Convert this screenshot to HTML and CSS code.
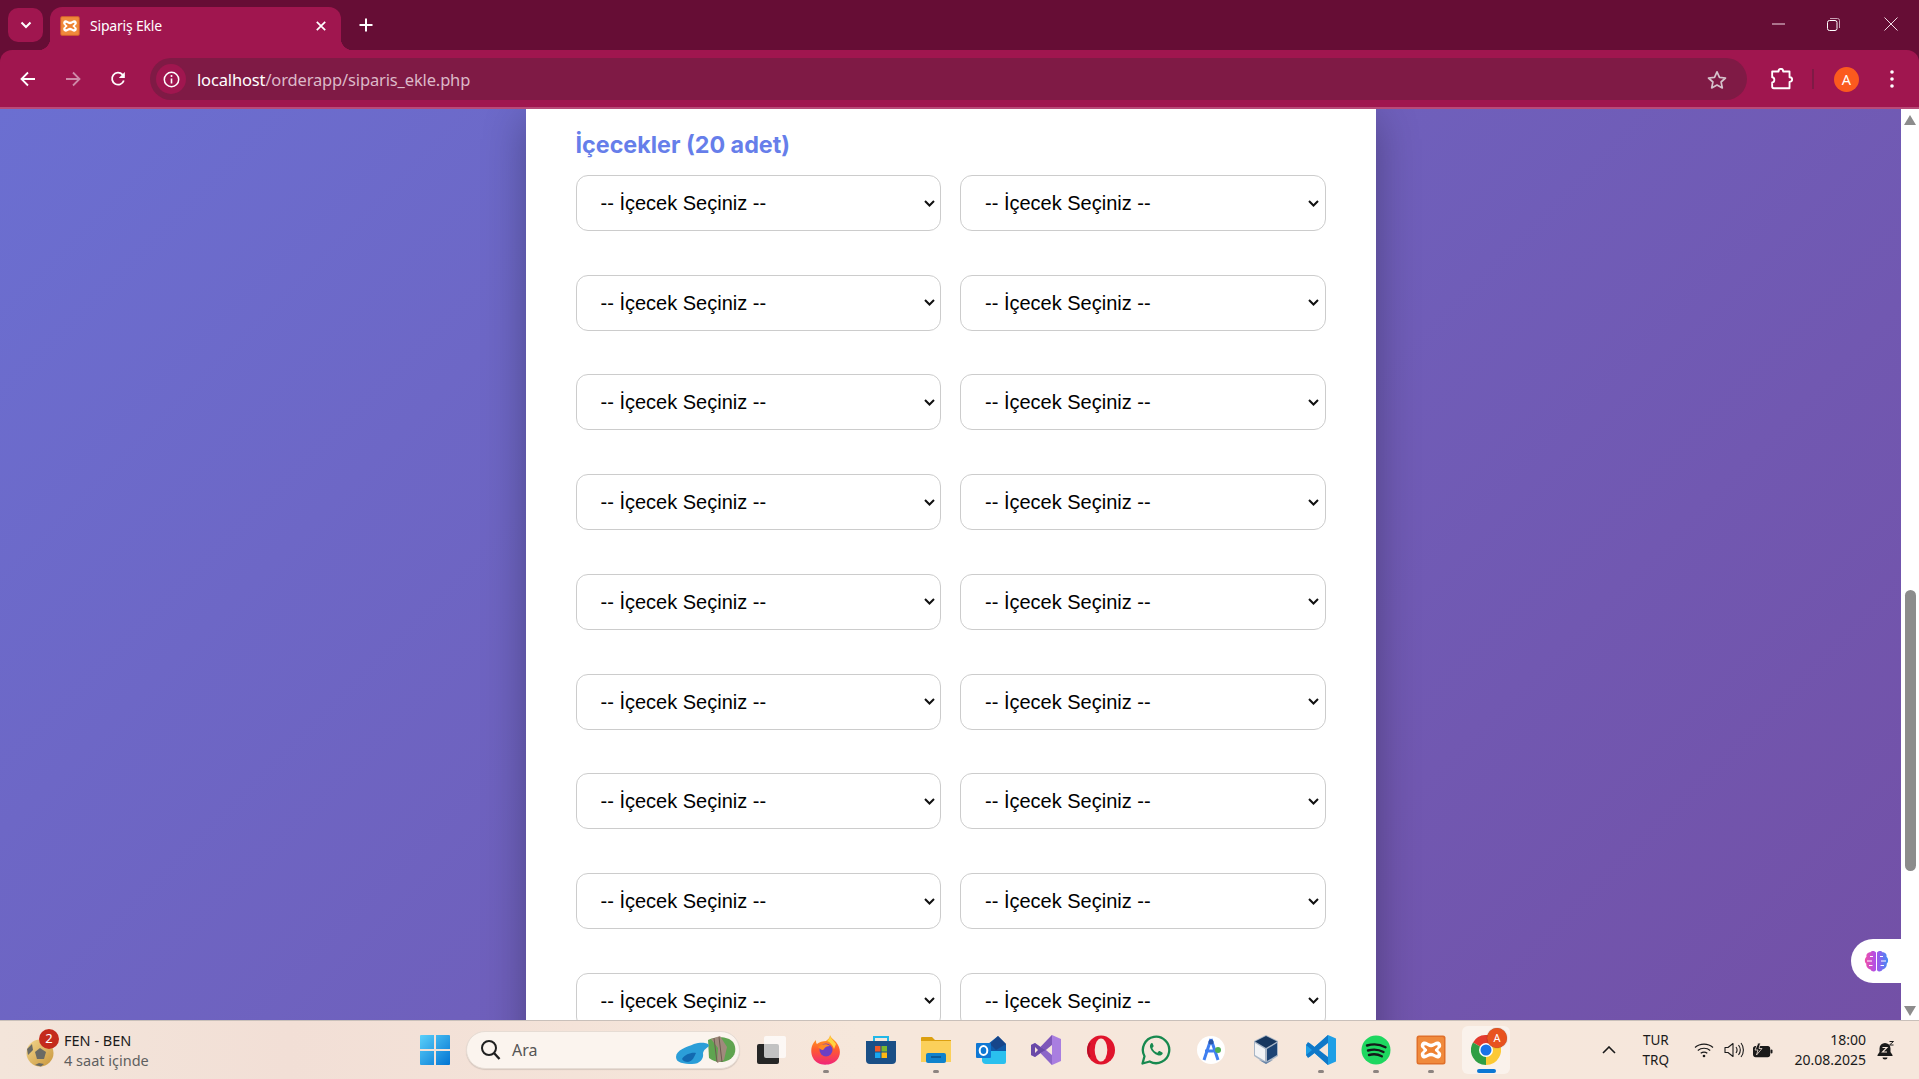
FILE: index.html
```html
<!doctype html>
<html lang="tr">
  <head>
    <meta charset="utf-8">
    <title>Sipariş Ekle</title>
    <link rel="stylesheet" href="styles.css">
  </head>
  <body>
    <svg class="defs" width="0" height="0">
      <symbol id="xampp" viewBox="0 0 30 30">
        <rect x="0.5" y="0.5" width="29" height="29" rx="2.5" fill="#e0702a"/>
        <rect x="2" y="2" width="26" height="26" rx="1.5" fill="#f08a3c"/>
        <path d="M8.5 6.5c2.6 0 3.4 2.2 6.500 2.200s3.900-2.200 6.500-2.200c2.700 0 3.700 2.300 3.700 4.300 0 2.400-2.700 2.700-2.700 4.200s2.700 1.800 2.700 4.200c0 2-1 4.300-3.700 4.300-2.600 0-3.400-2.200-6.500-2.200s-3.900 2.200-6.500 2.200c-2.700 0-3.700-2.300-3.700-4.300 0-2.400 2.700-2.700 2.700-4.200s-2.700-1.800-2.700-4.200c0-2 1-4.300 3.700-4.300z" fill="#fff"/>
        <path d="M9 10.200c2 0 3.500 2 6 2s4-2 6-2c1 0 .9 1.200.2 2-1 1.200-2.400 1.600-2.400 2.800s1.400 1.600 2.400 2.800c.7.800.8 2-.2 2-2 0-3.500-2-6-2s-4 2-6 2c-1 0-.9-1.200-.2-2 1-1.200 2.400-1.600 2.400-2.800s-1.400-1.600-2.400-2.800c-.7-.8-.8-2 .2-2z" fill="#ee8232"/>
      </symbol>
    </svg>

    <header class="tabstrip">
      <button class="tab-search">
        <svg width="12" height="8" viewBox="0 0 12 8"><path d="M1.500 1.500 6 6l4.500-4.500" fill="none" stroke="#fff" stroke-width="2"/></svg>
      </button>
      <div class="tab">
        <svg class="favicon" width="20" height="20"><use href="#xampp"/></svg>
        <span class="tab-title">Sipariş Ekle</span>
        <svg class="tab-close" width="10" height="10" viewBox="0 0 10 10"><path d="M.8.800l8.400 8.400M9.200.800.8 9.200" stroke="#fff" stroke-width="1.700"/></svg>
      </div>
      <svg class="new-tab" width="14" height="14" viewBox="0 0 14 14"><path d="M7 .5v13M.5 7h13" stroke="#fff" stroke-width="2"/></svg>
      <div class="window-controls">
        <svg width="13" height="2" viewBox="0 0 13 2"><path d="M0 1h13" stroke="#f2dbe5" stroke-width="1"/></svg>
        <svg width="13" height="13" viewBox="0 0 13 13"><rect x=".5" y="2.500" width="9.500" height="10" rx="2" fill="none" stroke="#fff"/><path d="M3 .5h7.500a2 2 0 0 1 2 2V10" fill="none" stroke="#c9a0b4"/></svg>
        <svg width="14" height="14" viewBox="0 0 14 14"><path d="M.5.500l13 13M13.500.500l-13 13" stroke="#f2dbe5" stroke-width="1"/></svg>
      </div>
    </header>

    <nav class="toolbar">
      <svg class="nav-icon" width="16" height="16" viewBox="0 0 16 16"><path d="M15 8H2M8 1.500 1.500 8 8 14.500" fill="none" stroke="#fff" stroke-width="1.800"/></svg>
      <svg class="nav-icon" width="16" height="16" viewBox="0 0 16 16"><path d="M1 8h13M8 1.500 14.500 8 8 14.500" fill="none" stroke="#cf8aa8" stroke-width="1.800"/></svg>
      <svg class="nav-icon" width="16" height="16" viewBox="0 0 16 16"><path d="M13.800 9.500A6 6 0 1 1 12.500 3.600L14 5" fill="none" stroke="#fff" stroke-width="1.800"/><path d="M14.800 1v6h-6z" fill="#fff"/></svg>
      <div class="omnibox">
        <span class="site-info">
          <svg width="17" height="17" viewBox="0 0 17 17"><circle cx="8.500" cy="8.500" r="7.200" fill="none" stroke="#fff" stroke-width="1.500"/><path d="M8.500 7.500v5" stroke="#fff" stroke-width="1.600"/><circle cx="8.500" cy="5" r="1" fill="#fff"/></svg>
        </span>
        <span class="url"><span class="host">localhost</span>/orderapp/siparis_ekle.php</span>
        <svg class="star" width="20" height="19" viewBox="0 0 20 19"><path d="M10 1.800l2.500 5.500 6 .7-4.400 4 1.200 5.900L10 15l-5.300 2.900 1.200-5.900-4.400-4 6-.7z" fill="none" stroke="#d5c3cb" stroke-width="1.700" stroke-linejoin="round"/></svg>
      </div>
      <svg class="extensions" width="22" height="22" viewBox="1 2.500 19 19"><path d="M2 5.500h5.500c0-3 4-3 4 0H17v5c3 0 3 4 0 4v5.500H3.500a1.500 1.500 0 0 1-1.500-1.500v-3.500c2.500 0 2.500-4.500 0-4.500z" fill="none" stroke="#fff" stroke-width="1.600" stroke-linejoin="round"/></svg>
      <span class="toolbar-sep"></span>
      <span class="avatar">A</span>
      <svg class="menu-dots" width="4" height="18" viewBox="0 0 4 18"><circle cx="2" cy="2" r="1.800" fill="#fff"/><circle cx="2" cy="9" r="1.800" fill="#fff"/><circle cx="2" cy="16" r="1.800" fill="#fff"/></svg>
    </nav>

    <div class="viewport">
      <main class="page">
        <form class="card">
          <h3 class="section-title">İçecekler (20 adet)</h3>
          <div class="select-grid">
            <select class="drink"><option>-- İçecek Seçiniz --</option></select>
            <select class="drink"><option>-- İçecek Seçiniz --</option></select>
            <select class="drink"><option>-- İçecek Seçiniz --</option></select>
            <select class="drink"><option>-- İçecek Seçiniz --</option></select>
            <select class="drink"><option>-- İçecek Seçiniz --</option></select>
            <select class="drink"><option>-- İçecek Seçiniz --</option></select>
            <select class="drink"><option>-- İçecek Seçiniz --</option></select>
            <select class="drink"><option>-- İçecek Seçiniz --</option></select>
            <select class="drink"><option>-- İçecek Seçiniz --</option></select>
            <select class="drink"><option>-- İçecek Seçiniz --</option></select>
            <select class="drink"><option>-- İçecek Seçiniz --</option></select>
            <select class="drink"><option>-- İçecek Seçiniz --</option></select>
            <select class="drink"><option>-- İçecek Seçiniz --</option></select>
            <select class="drink"><option>-- İçecek Seçiniz --</option></select>
            <select class="drink"><option>-- İçecek Seçiniz --</option></select>
            <select class="drink"><option>-- İçecek Seçiniz --</option></select>
            <select class="drink"><option>-- İçecek Seçiniz --</option></select>
            <select class="drink"><option>-- İçecek Seçiniz --</option></select>
            <select class="drink"><option>-- İçecek Seçiniz --</option></select>
            <select class="drink"><option>-- İçecek Seçiniz --</option></select>
          </div>
        </form>
        <div class="brain-pill">
          <svg width="25" height="23" viewBox="0 0 25 23">
            <defs>
              <linearGradient id="brain" x1="0" y1="0" x2="1" y2="0">
                <stop offset="0" stop-color="#f04fa8"/>
                <stop offset=".45" stop-color="#b04fe8"/>
                <stop offset="1" stop-color="#3f8cf5"/>
              </linearGradient>
            </defs>
            <path d="M12 2.500C11 .5 7.500.3 6.500 2.300 3.500 2.300 2 4.500 2.500 6.800.5 8.500.3 12 2.300 13.800 2 17 4 19 6.500 19.500c1.300 2.600 4.500 2.500 5.500.5zM13 2.500c1-2 4.500-2.200 5.500-.2 3 0 4.500 2.200 4 4.500 2 1.700 2.200 5.200.2 7 .3 3.200-1.700 5.200-4.200 5.700-1.300 2.600-4.500 2.500-5.500.5z" fill="url(#brain)"/>
            <path d="M3 11h5M6 6.500h3M5 15.500h3.500M16 6.500h3M17 11h5M16.500 15.500H20" stroke="#fff" stroke-width="1"/>
          </svg>
        </div>
      </main>
      <div class="scrollbar">
        <span class="scroll-up"></span>
        <div class="scroll-track"><span class="scroll-thumb"></span></div>
        <span class="scroll-down"></span>
      </div>
    </div>

    <footer class="taskbar">
      <div class="tb-left">
        <div class="weather-icon">
          <svg width="28" height="28" viewBox="0 0 28 28">
            <defs>
              <linearGradient id="ball" x1="0" y1="0" x2="1" y2="1">
                <stop offset="0" stop-color="#f3d68c"/>
                <stop offset="1" stop-color="#c8963c"/>
              </linearGradient>
            </defs>
            <circle cx="14" cy="14" r="13.500" fill="url(#ball)"/>
            <path d="M14 9l6 4-2 7h-7l-2-7z" fill="#6a6a64"/>
            <path d="M1 10l5-5 1 6-5 5zM9 26l4-2 5 1-3 2.500z" fill="#6a6a64"/>
          </svg>
          <span class="weather-badge">2</span>
        </div>
        <div class="weather-text">
          <span class="weather-title">FEN - BEN</span>
          <span class="weather-sub">4 saat içinde</span>
        </div>
      </div>

      <div class="tb-center">
        <svg class="start" width="30" height="30" viewBox="0 0 30 30">
          <defs>
            <linearGradient id="win" x1="0" y1="0" x2="1" y2="1">
              <stop offset="0" stop-color="#5ad0fa"/>
              <stop offset="1" stop-color="#0274d2"/>
            </linearGradient>
          </defs>
          <path d="M1 0h13v14H0V1a1 1 0 0 1 1-1zM16 0h13a1 1 0 0 1 1 1v13H16zM0 16h14v14H1a1 1 0 0 1-1-1zM16 16h14v13a1 1 0 0 1-1 1H16z" fill="url(#win)"/>
        </svg>
        <div class="searchbox">
          <svg width="21" height="22" viewBox="0 0 21 22"><circle cx="9" cy="9" r="7" fill="none" stroke="#1f1f1f" stroke-width="2"/><path d="M14 14l5.500 6" stroke="#1f1f1f" stroke-width="2.400"/></svg>
          <span class="search-label">Ara</span>
          <svg class="search-art" width="63" height="30" viewBox="0 0 63 30">
            <path d="M34 5c8-4 20-4 25 2 4 6 3 14-4 18-6 3-14 3-20-2z" fill="#5fa450"/>
            <path d="M37 4l9-3 7 11-3 13-7 3 1-15z" fill="#a08a7c"/>
            <path d="M40 3l3 24M45 2l3 25" stroke="#6e5a50" stroke-width="1"/>
            <path d="M2 22C2 15 13 12 20 9c6-2 15-2 15 2-3 3-5 3-6 7 1 6-3 11-11 11S2 28 2 22z" fill="#2b9ed8"/>
            <path d="M8 24c3-5 10-7 14-6-2 4-3 8-8 9-3 0-5-1-6-3z" fill="#1269b0"/>
          </svg>
        </div>
        <div class="tb-apps">
          <span class="app">
            <svg width="30" height="30" viewBox="0 0 30 30">
              <rect x="1" y="9" width="22" height="20" rx="2" fill="#262626"/>
              <rect x="8" y="1" width="22" height="22" rx="2" fill="#fff" fill-opacity=".72"/>
            </svg>
          </span>
          <span class="app running">
            <svg width="30" height="30" viewBox="0 0 30 30">
              <defs>
                <linearGradient id="fox" x1="0" y1="0" x2="0" y2="1">
                  <stop offset="0" stop-color="#ffb020"/>
                  <stop offset=".5" stop-color="#ff5a30"/>
                  <stop offset="1" stop-color="#f0257a"/>
                </linearGradient>
              </defs>
              <path d="M19 0c1 3 3 4 6 7 5 6 5 13 1 18-4 5-14 6-19 3C1 25-1 17 1 11c1-3 3-5 4-6 0 2 0 3 1 4 2-2 6-3 9-3 2-2 4-3 4-6z" fill="url(#fox)"/>
              <path d="M19 1c1 3 4 5 6 8l-2 5c-1-4-4-7-7-8 2-2 3-3 3-5z" fill="#ffd53f"/>
              <circle cx="15" cy="15" r="6.500" fill="#6d3fc4"/>
              <path d="M7 12c3-3 9-4 12-1-3 0-5 1-6 3-1 2-3 1-6-2z" fill="#ff8a24"/>
            </svg>
          </span>
          <span class="app">
            <svg width="30" height="30" viewBox="0 0 30 30">
              <path d="M8 7V2h14v5" fill="none" stroke="#22b8e8" stroke-width="2"/>
              <path d="M0 6h30v19a4 4 0 0 1-4 4H4a4 4 0 0 1-4-4z" fill="#1a4f86"/>
              <rect x="9" y="11" width="5.500" height="5.500" fill="#ef5a28"/>
              <rect x="15.500" y="11" width="5.500" height="5.500" fill="#7cb82e"/>
              <rect x="9" y="17.500" width="5.500" height="5.500" fill="#18a8f0"/>
              <rect x="15.500" y="17.500" width="5.500" height="5.500" fill="#fdb813"/>
            </svg>
          </span>
          <span class="app running">
            <svg width="30" height="30" viewBox="0 0 30 30">
              <path d="M0 3a1 1 0 0 1 1-1h10l3 3h16v4H0z" fill="#dca010"/>
              <path d="M0 6h30v21H0z" fill="#fbd05a"/>
              <rect x="5" y="18" width="20" height="10" rx="2" fill="#0f82cc"/>
              <path d="M10 22h10" stroke="#0a4f88" stroke-width="1.500"/>
            </svg>
          </span>
          <span class="app">
            <svg width="30" height="30" viewBox="0 0 30 30">
              <path d="M12 9l10-8 8 8v10H12z" fill="#0f5aa8"/>
              <path d="M22 1l8 8-10 6-6-6z" fill="#1a3f80" fill-opacity=".75"/>
              <path d="M6 16h24v11a2 2 0 0 1-2 2H10a4 4 0 0 1-4-3z" fill="#2ac0ee"/>
              <rect x="0" y="8" width="15" height="15" rx="1" fill="#0f78d4"/>
              <ellipse cx="7.500" cy="15.500" rx="3.800" ry="4.500" fill="none" stroke="#fff" stroke-width="2"/>
            </svg>
          </span>
          <span class="app">
            <svg width="30" height="30" viewBox="0 0 30 30">
              <path d="M21 0l9 4v22l-9 4L9.500 18 4 22l-4-2V10l4-2 5.500 4z" fill="#a97ee0"/>
              <path d="M21 0v10l-6 5-5.500-3z" fill="#7e57b8"/>
              <path d="M21 30V20l-6-5-5.500 3z" fill="#8c66c8"/>
              <path d="M0 10l4-2 5.500 4L15 15l-5.500 3L4 22l-4-2z" fill="#6a4aa8"/>
              <path d="M4 12v6l3-3z" fill="#f5e6da"/>
              <path d="M21 10v10l-6-5z" fill="#f5e6da"/>
            </svg>
          </span>
          <span class="app">
            <svg width="30" height="30" viewBox="0 0 30 30">
              <ellipse cx="15" cy="15" rx="14" ry="14.500" fill="#e0142c"/>
              <ellipse cx="15" cy="15" rx="6.300" ry="11.500" fill="#f5e6da"/>
              <path d="M4 8a14 14.500 0 0 0 0 14" fill="none" stroke="#b80f28" stroke-width="2"/>
            </svg>
          </span>
          <span class="app">
            <svg width="30" height="30" viewBox="0 0 30 30">
              <path d="M1.500 28.500l2-7.200A13.200 13.200 0 1 1 8.700 26.500z" fill="none" stroke="#17894f" stroke-width="2.300" stroke-linejoin="round"/>
              <path d="M10.500 8c-1.500 1-2 3-1.200 5 1.300 3.400 4.300 6.200 7.500 7.300 2.200.7 4 0 4.800-1.500.3-.6.200-1.100-.3-1.400l-2.600-1.300c-.5-.2-.9-.1-1.200.3l-.8 1c-.3.300-.6.300-1 .2-1.800-.8-3.300-2.200-4.200-4-.2-.4-.1-.7.200-1l.7-.9c.2-.3.300-.7.100-1.100L11.500 8.300c-.2-.5-.6-.5-1-.3z" fill="#17894f"/>
            </svg>
          </span>
          <span class="app">
            <svg width="30" height="30" viewBox="0 0 30 30">
              <circle cx="15" cy="15" r="14" fill="#fff"/>
              <path d="M15 4l-7 21M15 4l7 21M9 16h12" fill="none" stroke="#3f7ff0" stroke-width="3"/>
              <circle cx="15" cy="7" r="2.500" fill="#2a55a8"/>
              <circle cx="22" cy="15" r="3" fill="#4caf50"/>
            </svg>
          </span>
          <span class="app">
            <svg width="30" height="30" viewBox="0 0 30 30">
              <path d="M15 0l12 6v15l-12 8-12-8V6z" fill="#a9b6c6"/>
              <path d="M15 1l11 5.500L15 13 4 6.500z" fill="#17375f"/>
              <path d="M4 8l10 6v12L4 20z" fill="#f2f3f5"/>
              <path d="M26 8l-10 6v12l10-6z" fill="#1d4474"/>
              <path d="M8 25l7 4 7-4-7 2z" fill="#6a86a8"/>
            </svg>
          </span>
          <span class="app running">
            <svg width="30" height="30" viewBox="0 0 30 30">
              <path d="M22 0l8 3.500v23L22 30 8.500 18l-5 4L0 20V10l3.500-2 5 4z" fill="#1e9fe6"/>
              <path d="M22 0v30L8.500 18 2 23 0 20l6-5-6-5 2-3 6.500 5z" fill="#0f78c8"/>
              <path d="M22 8v14l-9-7z" fill="#f5e6da"/>
            </svg>
          </span>
          <span class="app running">
            <svg width="30" height="30" viewBox="0 0 30 30">
              <circle cx="15" cy="15" r="14.500" fill="#1ed760"/>
              <path d="M6 10.500c6-1.700 13-1.200 18.500 1.700M7 15.500c5-1.400 11-1 15.500 1.500M8 20c4.300-1.100 9-.8 12.800 1.300" fill="none" stroke="#14191a" stroke-width="2.400" stroke-linecap="round"/>
            </svg>
          </span>
          <span class="app running"><svg width="30" height="30"><use href="#xampp"/></svg></span>
          <span class="app active">
            <svg width="30" height="30" viewBox="0 0 30 30">
              <path d="M15 15L2 7.500A15 15 0 0 1 28 7.500z" fill="#e33b2e"/>
              <path d="M15 15L15 30A15 15 0 0 1 2 7.500z" fill="#2f9e44"/>
              <path d="M15 15L28 7.500A15 15 0 0 1 15 30z" fill="#fcc934"/>
              <circle cx="15" cy="15" r="7" fill="#fff"/>
              <circle cx="15" cy="15" r="5.500" fill="#1a73e8"/>
            </svg>
            <span class="app-badge">A</span>
          </span>
        </div>
      </div>

      <div class="tray">
        <svg class="tray-chevron" width="14" height="8" viewBox="0 0 14 8"><path d="M1 7l6-6 6 6" fill="none" stroke="#1a1a1a" stroke-width="1.600"/></svg>
        <div class="lang"><span>TUR</span><span>TRQ</span></div>
        <svg class="tray-wifi" width="20" height="16" viewBox="0 0 20 16"><path d="M1 5.500c5-4.500 13-4.500 18 0M3.800 8.500c3.500-3 9-3 12.400 0M6.700 11.300c2-1.500 4.600-1.500 6.600 0" fill="none" stroke="#1a1a1a" stroke-width="1.200"/><circle cx="10" cy="14" r="1.300" fill="#1a1a1a"/></svg>
        <svg class="tray-sound" width="21" height="16" viewBox="0 0 21 16"><path d="M1 5.500h3L9 1.500v13l-5-4H1z" fill="none" stroke="#1a1a1a" stroke-width="1.100" stroke-linejoin="round"/><path d="M12 5c1.300 1.800 1.300 4.200 0 6M14.500 3c2.200 3 2.200 7 0 10M17 1c3.200 4 3.200 10 0 14" fill="none" stroke="#1a1a1a" stroke-width="1.100"/></svg>
        <svg class="tray-battery" width="20" height="15" viewBox="0 0 20 15"><rect x=".6" y="3.600" width="16" height="10" rx="2" fill="#1a1a1a" stroke="#1a1a1a" stroke-width="1.200"/><rect x="17.500" y="6.500" width="2" height="4" rx="1" fill="#1a1a1a"/><path d="M5 0L2 7h3l-1.500 5L9 5.500H6L7.500 0z" fill="#1a1a1a" stroke="#f5e6da" stroke-width=".8"/></svg>
        <div class="clock"><span>18:00</span><span>20.08.2025</span></div>
        <svg class="tray-bell" width="18" height="20" viewBox="0 0 18 20"><path d="M8 3a5.500 5.500 0 0 0-5.500 5.500V12L.5 15v1h15v-1l-2-3V8.500A5.500 5.500 0 0 0 8 3z" fill="#1a1a1a"/><path d="M5.500 17.500h5a2.500 2 0 0 1-5 0z" fill="#1a1a1a"/><path d="M5.500 7.500h4.500l-4.500 4.500H10" fill="none" stroke="#f5e6da" stroke-width="1.100"/><path d="M12.500 1.500h4l-4 3.500h4" fill="none" stroke="#1a1a1a" stroke-width="1"/></svg>
      </div>
    </footer>
  </body>
</html>
```

FILE: styles.css
```css
* {
  box-sizing: border-box;
}
html, body {
  margin: 0;
  height: 100%;
}
body {
  width: 1919px;
  height: 1079px;
  display: flex;
  flex-direction: column;
  overflow: hidden;
  font-family: "Noto Sans", sans-serif;
  background: #660d35;
}
.defs {
  position: absolute;
}

/* tab strip */
.tabstrip {
  height: 50px;
  flex: none;
  display: flex;
  align-items: flex-end;
  background: #660d35;
  padding-left: 8px;
}
.tab-search {
  width: 35px;
  height: 34px;
  margin-bottom: 8px;
  padding: 0;
  border: none;
  border-radius: 10px;
  background: #a0164f;
  display: flex;
  align-items: center;
  justify-content: center;
}
.tab {
  position: relative;
  width: 291px;
  height: 43px;
  margin-left: 7px;
  padding: 0 15px 6px 10px;
  display: flex;
  align-items: center;
  gap: 10px;
  background: #a0164f;
  border-radius: 12px 12px 0 0;
  color: #fff;
  font-size: 14px;
}
.tab::before,
.tab::after {
  content: "";
  position: absolute;
  bottom: 0;
  width: 12px;
  height: 12px;
}
.tab::before {
  left: -12px;
  background: radial-gradient(circle at 0 0, transparent 12px, #a0164f 12.500px);
}
.tab::after {
  right: -12px;
  background: radial-gradient(circle at 100% 0, transparent 12px, #a0164f 12.500px);
}
.favicon {
  flex: none;
}
.tab-title {
  flex: 1;
  letter-spacing: -0.2px;
}
.new-tab {
  margin: 0 0 18px 18px;
}
.window-controls {
  margin-left: auto;
  margin-bottom: 19px;
  display: flex;
  align-items: center;
  gap: 42px;
  padding-right: 21px;
}
.window-controls svg:last-child {
  margin-left: 2px;
}

/* toolbar */
.toolbar {
  height: 59px;
  flex: none;
  display: flex;
  align-items: center;
  padding: 1px 0 0 20px;
  background: #a0164f;
  border-bottom: 2px solid #b94a78;
  border-radius: 12px 12px 0 0;
}
.toolbar > * {
  flex: none;
}
.nav-icon {
  margin-right: 29px;
}
.nav-icon:nth-child(3) {
  margin-right: 24px;
}
.omnibox {
  width: 1597px;
  height: 42px;
  display: flex;
  align-items: center;
  padding: 0 20px 0 6px;
  border-radius: 21px;
  background: #7f1a45;
  font-size: 16.500px;
  color: #dcb9c8;
}
.site-info {
  width: 30px;
  height: 30px;
  border-radius: 50%;
  background: #a0164f;
  display: flex;
  align-items: center;
  justify-content: center;
}
.url {
  margin-left: 11px;
  flex: 1;
  letter-spacing: -0.15px;
}
.host {
  color: #fff;
}
.extensions {
  margin-left: 24px;
}
.toolbar-sep {
  width: 2px;
  height: 20px;
  margin: 0 20px 0 19px;
  background: #7f1a45;
}
.avatar {
  width: 25px;
  height: 25px;
  border-radius: 50%;
  background: #fb5a1e;
  color: #fff;
  font-size: 14.500px;
  display: flex;
  align-items: center;
  justify-content: center;
}
.menu-dots {
  margin-left: 31px;
}

/* page */
.viewport {
  flex: 1;
  min-height: 0;
  display: flex;
}
.page {
  position: relative;
  flex: 1;
  overflow: hidden;
  background: linear-gradient(135deg, #6b6fd1, #7350a6);
}
.card {
  width: 850px;
  margin: 0 auto;
  padding: 19px 50px 40px;
  background: #fff;
  box-shadow: 0 10px 40px rgba(0, 0, 0, 0.3);
}
.section-title {
  margin: 0 0 13px;
  font-family: Inter, sans-serif;
  font-size: 23.300px;
  line-height: 34px;
  font-weight: 700;
  color: #667eea;
}
.select-grid {
  display: grid;
  grid-template-columns: 1fr 1fr;
  column-gap: 19px;
  row-gap: 43.720px;
}
.drink {
  appearance: none;
  width: 100%;
  height: 56px;
  padding: 0 24px;
  border: 1px solid #ccc;
  border-radius: 12px;
  background: #fff url("data:image/svg+xml,%3Csvg xmlns='http://www.w3.org/2000/svg' width='11' height='7' viewBox='0 0 11 7'%3E%3Cpath d='M1 1l4.500 4.500L10 1' fill='none' stroke='%23111' stroke-width='2'/%3E%3C/svg%3E") no-repeat right 5.500px center;
  color: #000;
  font-family: "Liberation Sans", Arial, sans-serif;
  font-size: 20px;
}
.brain-pill {
  position: absolute;
  right: 0;
  top: 830px;
  width: 50px;
  height: 44px;
  padding-left: 13px;
  display: flex;
  align-items: center;
  background: #fff;
  border-radius: 22px 0 0 22px;
}

/* scrollbar */
.scrollbar {
  width: 18px;
  flex: none;
  display: flex;
  flex-direction: column;
  align-items: center;
  background: #fff;
}
.scroll-up,
.scroll-down {
  flex: none;
  width: 0;
  height: 0;
  border-left: 6.500px solid transparent;
  border-right: 6.500px solid transparent;
}
.scroll-up {
  margin-top: 6px;
  border-bottom: 10px solid #8c8c8c;
}
.scroll-down {
  margin-bottom: 4px;
  border-top: 10px solid #8c8c8c;
}
.scroll-track {
  flex: 1;
  width: 100%;
  padding-top: 465px;
  display: flex;
  justify-content: center;
}
.scroll-thumb {
  width: 11px;
  height: 281px;
  border-radius: 6px;
  background: #8c8c8c;
}

/* taskbar */
.taskbar {
  height: 59px;
  flex: none;
  display: flex;
  align-items: center;
  border-top: 1px solid #c9c0ba;
  background: linear-gradient(90deg, #f3e5da 0%, #f2dfd6 15%, #f6e7db 45%, #f6e7dc 100%);
  color: #1a1a1a;
}
.tb-left {
  width: 420px;
  flex: none;
  padding-left: 26px;
  display: flex;
  align-items: center;
}
.weather-icon {
  position: relative;
  width: 28px;
  height: 28px;
  margin-top: 5px;
}
.weather-badge {
  position: absolute;
  left: 13px;
  top: -10px;
  width: 20px;
  height: 20px;
  border-radius: 50%;
  background: #c42b1c;
  color: #fff;
  font-size: 13px;
  line-height: 19px;
  text-align: center;
}
.weather-text {
  margin-left: 10px;
  display: flex;
  flex-direction: column;
  font-size: 14.500px;
  line-height: 20px;
}
.weather-sub {
  color: #5f5f5f;
}
.tb-center {
  display: flex;
  align-items: center;
}
.start {
  flex: none;
}
.searchbox {
  width: 274px;
  height: 38px;
  margin: 0 16px;
  padding: 0 2px 0 13px;
  display: flex;
  align-items: center;
  border-radius: 19px;
  background: #fbf4ee;
  border: 1px solid #e6dcd4;
  box-shadow: 0 1px 1px rgba(0, 0, 0, 0.12);
}
.search-label {
  margin-left: 11px;
  flex: 1;
  font-size: 16px;
  color: #555;
}
.tb-apps {
  display: flex;
  gap: 25px;
}
.app {
  position: relative;
  width: 30px;
  height: 30px;
  display: block;
}
.app svg {
  display: block;
}
.running::after {
  content: "";
  position: absolute;
  left: 12px;
  bottom: -8px;
  width: 6px;
  height: 3px;
  border-radius: 2px;
  background: #8c8480;
}
.active::before {
  content: "";
  position: absolute;
  left: -9px;
  top: -9px;
  width: 48px;
  height: 48px;
  border-radius: 6px;
  background: rgba(255, 255, 255, 0.45);
}
.active svg {
  position: relative;
}
.active::after {
  content: "";
  position: absolute;
  left: 6px;
  bottom: -8px;
  width: 19px;
  height: 4px;
  border-radius: 2px;
  background: #0a78d4;
}
.app-badge {
  position: absolute;
  left: 16px;
  top: -7px;
  width: 20px;
  height: 20px;
  border-radius: 50%;
  background: #e8531f;
  box-shadow: 0 0 1px rgba(90, 30, 10, 0.8);
  color: #fff;
  font-size: 11px;
  line-height: 20px;
  text-align: center;
}
.tray {
  margin-left: auto;
  padding-right: 24px;
  display: flex;
  align-items: center;
  font-size: 13.500px;
  line-height: 20px;
}
.lang {
  margin-left: 27px;
  display: flex;
  flex-direction: column;
  align-items: center;
}
.tray-wifi {
  margin-left: 24.500px;
}
.tray-sound {
  margin-left: 10px;
}
.tray-battery {
  margin-left: 8px;
}
.clock {
  width: 92px;
  margin-left: 1.500px;
  display: flex;
  flex-direction: column;
  align-items: flex-end;
  font-size: 14px;
}
.tray-bell {
  margin-left: 11px;
}
```
